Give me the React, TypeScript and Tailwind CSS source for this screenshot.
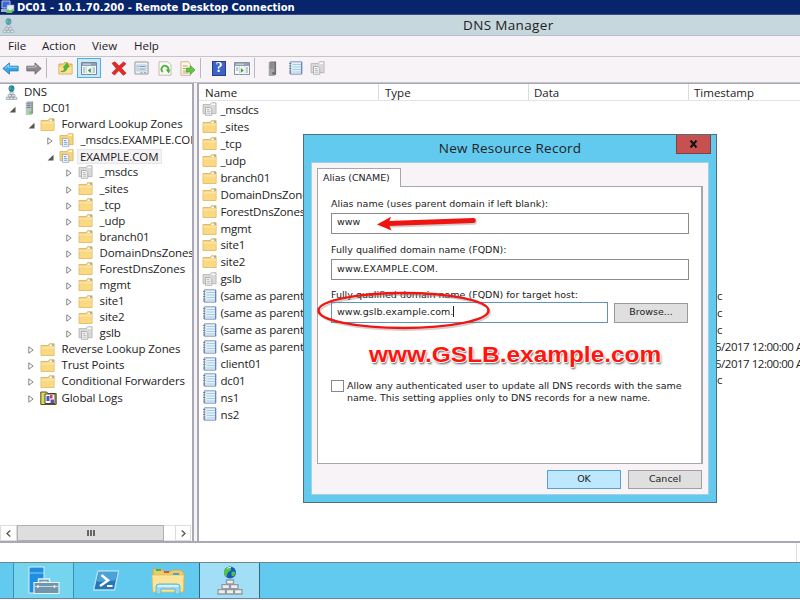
import React from "react";

const Svg = ({ c, v = "0 0 16 16", children }: { c: string; v?: string; children: React.ReactNode }) => (
  <svg className={`shrink-0 ${c}`} viewBox={v} preserveAspectRatio="none">{children}</svg>
);

const Folder = () => (
  <Svg c="h-[13px] w-[15px]" v="0 0 15 13">
    <path d="M1 2.5h7l1.5-1.8h4.6v11.8H1z" fill="#eec765" stroke="#d6aa50" strokeWidth=".7" />
    <path d="M1.4 3.6h12.4v8.6H1.4z" fill="#fbd983" />
    <path d="M1.4 3.6h12.4v2H1.4z" fill="#fde3a0" />
    <path d="M9.5 1.6h3.6v1.5H9.5z" fill="#fff" />
    <path d="M12 1.3h1.5v1.5H12z" fill="#58a5d8" />
  </Svg>
);

const ZoneFolder = ({ gray = false }: { gray?: boolean }) => (
  <Svg c="h-[14px] w-[15px]" v="0 0 15 14">
    <path d="M1 2.5h7l1.5-1.8h4.6v11H1z" fill={gray ? "#d9d9d9" : "#f9d37a"} stroke={gray ? "#aaa" : "#d6aa50"} strokeWidth=".7" />
    <path d="M9.500 1.600h3.600v1.300H9.500z" fill="#fff" />
    <path d="M3.500 5.500h4.500l1.800 1.700v6.100H3.500z" fill={gray ? "#f5f5f5" : "#fff"} stroke={gray ? "#999" : "#7a96b8"} strokeWidth=".7" />
    <path d="M4.800 7.500h2.500M4.800 9.300h3.700M4.800 11.200h3.700" stroke={gray ? "#aaa" : "#4a82cd"} strokeWidth=".8" />
  </Svg>
);

const Record = () => (
  <Svg c="h-[14px] w-[15px]" v="0 0 15 14">
    <path d="M2.3.8h11.4v12.4H2.3z" fill="#e4f2fa" stroke="#8295c0" strokeWidth="1" />
    <path d="M4.500 3.500h8.600M4.500 6h8.600M4.500 8.500h8.600M4.500 11h8.600" stroke="#a6cce0" strokeWidth="1.100" />
    <path d="M1 2.500h2.400M1 5h2.400M1 7.500h2.400M1 10h2.400M1 12h2.400" stroke="#666f88" strokeWidth=".8" />
    <path d="M13.700 1v12" stroke="#5b6fb4" strokeWidth=".8" />
  </Svg>
);

const DnsIcon = ({ c }: { c: string }) => (
  <Svg c={c}>
    <circle cx="8" cy="3.800" r="3.600" fill="#2878c4" />
    <path d="M5.500 2.400c2-2 3-1 2.500.4S6.500 5 6 6.200c-1-.8-1.400-2.600-.5-3.800zM9 3.500l2 .5-1 2.200-1.300-.8z" fill="#43b44e" />
    <path d="M6 7.500h4v2.600H6zM3.800 10.300h4v2.400h-4zM8.300 10.300h4v2.400h-4zM1.500 13h4v2.400h-4zM6 13h4v2.400H6zM10.500 13h4v2.400h-4z" fill="#e4e8eb" stroke="#87919a" strokeWidth=".7" />
  </Svg>
);

const Server = ({ c, on = false }: { c: string; on?: boolean }) => (
  <Svg c={c} v="0 0 10 15">
    <path d="M1 1.500L3 .5h6v13l-2 1H1z" fill={on ? "#8d979e" : "#6f6f6f"} />
    <path d="M1 1.500h6v13H1z" fill={on ? "#b9c5cd" : "#a5a5a5"} />
    <path d="M2 3h4.300M2 5h4.300M2 7h4.300" stroke="#59636a" strokeWidth=".8" />
    <circle cx="6" cy="12.300" r="1.300" fill={on ? "#4bdb34" : "#666"} />
  </Svg>
);

const Logs = () => (
  <Svg c="h-[14px] w-[17px]" v="0 0 17 14">
    <path d="M.8 3V1h6l1 1.500h8.400v11H.8z" fill="#dfd65c" stroke="#55551c" strokeWidth="1" />
    <path d="M5 3h10v9.500H5z" fill="#fff" stroke="#333" strokeWidth=".9" />
    <path d="M6.500 5h3v5h-3z" fill="#3e58d8" /><path d="M10 4h2.500v3.500H10z" fill="#e33b3b" /><path d="M10.500 8.500H14V12h-3.500z" fill="#684bb5" />
  </Svg>
);

type Kind = "dns" | "server" | "folder" | "zone" | "gray" | "logs" | "record";
const Icon = ({ kind }: { kind: Kind }) => {
  switch (kind) {
    case "dns": return <DnsIcon c="h-[15px] w-[13px]" />;
    case "server": return <Server c="h-[14px] w-[9px]" on />;
    case "zone": return <ZoneFolder />;
    case "gray": return <ZoneFolder gray />;
    case "logs": return <Logs />;
    case "record": return <Record />;
    default: return <Folder />;
  }
};

const INDENT = ["pl-[3px]", "pl-[5px]", "pl-[24px]", "pl-[43px]", "pl-[62px]"];
const TREE: [number, Kind, string, "open" | "closed" | ""][] = [
  [0, "dns", "DNS", ""],
  [1, "server", "DC01", "open"],
  [2, "folder", "Forward Lookup Zones", "open"],
  [3, "zone", "_msdcs.EXAMPLE.COM", "closed"],
  [3, "zone", "EXAMPLE.COM", "open"],
  [4, "gray", "_msdcs", "closed"],
  [4, "folder", "_sites", "closed"],
  [4, "folder", "_tcp", "closed"],
  [4, "folder", "_udp", "closed"],
  [4, "folder", "branch01", "closed"],
  [4, "folder", "DomainDnsZones", "closed"],
  [4, "folder", "ForestDnsZones", "closed"],
  [4, "folder", "mgmt", "closed"],
  [4, "folder", "site1", "closed"],
  [4, "folder", "site2", "closed"],
  [4, "gray", "gslb", "closed"],
  [2, "folder", "Reverse Lookup Zones", "closed"],
  [2, "folder", "Trust Points", "closed"],
  [2, "folder", "Conditional Forwarders", "closed"],
  [2, "logs", "Global Logs", "closed"],
];

const RECORDS: [Kind, string, string][] = [
  ["gray", "_msdcs", ""],
  ["folder", "_sites", ""],
  ["folder", "_tcp", ""],
  ["folder", "_udp", ""],
  ["folder", "branch01", ""],
  ["folder", "DomainDnsZones", ""],
  ["folder", "ForestDnsZones", ""],
  ["folder", "mgmt", ""],
  ["folder", "site1", ""],
  ["folder", "site2", ""],
  ["gray", "gslb", ""],
  ["record", "(same as parent", "static"],
  ["record", "(same as parent", "static"],
  ["record", "(same as parent", "static"],
  ["record", "(same as parent", "5/2017 12:00:00 AM"],
  ["record", "client01", "5/2017 12:00:00 AM"],
  ["record", "dc01", "static"],
  ["record", "ns1", ""],
  ["record", "ns2", ""],
];

const Sep = ({ c }: { c: string }) => <div className={`h-[20px] w-px shrink-0 bg-[#b9b9bd] ${c}`} />;

const Toolbar = () => (
  <div className="flex h-[26px] shrink-0 items-center border-b border-[#c5c4ca] bg-[#f7f3f7] pb-[3px] pl-[2px]">
    <Svg c="h-[13px] w-[17px]" v="0 0 16 13"><path d="M.8 6.500L7 .9v3.300h8.200v4.700H7v3.300z" fill="#3aa4e4" stroke="#2379b6" strokeWidth=".8" /><path d="M3 6.200L6.300 3.200v2H14.500" stroke="#8bd3f7" fill="none" /></Svg>
    <Svg c="ml-[7px] h-[13px] w-[16px]" v="0 0 16 13"><path d="M15.200 6.500L9 .9v3.300H.8v4.700H9v3.300z" fill="#8b8b8b" stroke="#646464" strokeWidth=".8" /><path d="M1.500 5.200h8v-2l2 2" stroke="#bbb" fill="none" /></Svg>
    <Sep c="ml-[4px]" />
    <Svg c="ml-[11px] h-[14px] w-[15px]" v="0 0 16 14"><path d="M1 3h5l1-1.500h3L11 3h4v10H1z" fill="#f8d474" stroke="#c99f48" strokeWidth=".8" /><path d="M1.500 6h13v6.500h-13z" fill="#fbe198" /><path d="M3 10.500c3 0 4-2 4.200-4H5.500l4-4.500L12 6h-2c0 3-2.500 5.500-7 4.500z" fill="#52bb35" stroke="#318a20" strokeWidth=".5" /></Svg>
    <div className="ml-[4px] flex h-[20px] w-[24px] items-center justify-center border border-[#4cafe2] bg-[#c8e9fb]"><Svg c="h-[13px] w-[16px]" v="0 0 16 13"><path d="M.5.5h15v12H.5z" fill="#f7fafc" stroke="#74879a" /><path d="M1 1h14v3H1z" fill="#91a0b1" /><path d="M2 2.200h8M5.500 4v8.500M11 4v8.500" stroke="#d0dce6" /><path d="M9.800 6v5l-3-2.500z" fill="#38a532" /><path d="M2 6h2.300M2 8h2.300M2 10h2.300M12 6h2M12 8h2M12 10h2" stroke="#8896a4" /></Svg></div>
    <Svg c="ml-[10px] h-[15px] w-[16px]"><path d="M1 2.500L4 .8l4 4.600L12.500 1 15 3l-4.600 4.800 4.800 5.300-3 2.100-4.300-5L3.500 15 .9 12.700 5.300 8z" fill="#e32b28" stroke="#b41515" strokeWidth=".6" /></Svg>
    <Svg c="ml-[7px] h-[14px] w-[15px]" v="0 0 16 14"><path d="M1 1h14v12H1z" fill="#f3f3f3" stroke="#92989c" /><path d="M3 4h10v6H3z" fill="#dceaf2" stroke="#a7bac5" strokeWidth=".7" /><path d="M4 5.500h1M6 5.500h6M4 8h1M6 8h6M7 11.700h2M10.500 11.700h2.500" stroke="#6b9fc0" /></Svg>
    <Svg c="ml-[9px] h-[15px] w-[14px]" v="0 0 14 15"><path d="M1 .8h9l3 3v10.400H1z" fill="#fafafa" stroke="#b6ac9b" strokeWidth=".8" /><path d="M5 11A3.400 3.400 0 1 1 10 9.500" fill="none" stroke="#48b334" strokeWidth="1.700" /><path d="M7.600 8.600h4.800L10.800 12.600z" fill="#48b334" /></Svg>
    <Svg c="ml-[8px] h-[15px] w-[16px]" v="0 0 17 15"><path d="M1 .8h8l2 2.500v11H1z" fill="#fff8dc" stroke="#bba77c" strokeWidth=".8" /><path d="M3 5h5M3 7.500h4M3 10h5M3 12h6" stroke="#8e8a7b" strokeWidth=".8" /><path d="M7 7h4V4.500l5 4.500-5 4.500V11H7z" fill="#62c741" stroke="#3a9028" strokeWidth=".6" /></Svg>
    <Sep c="ml-[4px]" />
    <div className="ml-[11px] flex h-[15px] w-[14px] items-center justify-center border border-[#233f91] bg-[#3c63c4] font-['Liberation_Serif',serif] text-[14px] font-bold leading-none text-white">?</div>
    <Svg c="ml-[8px] h-[13px] w-[16px]" v="0 0 16 13"><path d="M.5.5h15v12H.5z" fill="#f7fafc" stroke="#85919c" /><path d="M1 1h14v3H1z" fill="#91a0b1" /><path d="M2 2.200h8M5.500 4v8.500M11 4v8.500" stroke="#d0dce6" /><path d="M6.800 6v5l3-2.500z" fill="#38a532" /><path d="M2 6h2.300M2 8h2.300M12 6h2M12 8h2M12 10h2" stroke="#8896a4" /></Svg>
    <Sep c="ml-[4px]" />
    <Server c="ml-[13px] h-[15px] w-[9px]" />
    <div className="ml-[11px] flex"><Record /></div>
    <div className="ml-[7px] flex"><ZoneFolder gray /></div>
  </div>
);

const TreePane = () => (
  <div className="flex w-[194px] shrink-0 flex-col overflow-hidden border-r-2 border-t border-[#a9a9b5] bg-white tracking-[-0.1px]">
    <div className="flex flex-1 flex-col">
      {TREE.map(([level, kind, label, state], i) => (
        <div key={i} className={`flex h-[16.080px] shrink-0 items-center ${INDENT[level]}`}>
          {level > 0 && (
            <div className="flex w-[16px] shrink-0 items-center pl-[4px]">
              {state === "open"
                ? <Svg c="mt-[2px] h-[7px] w-[7px]" v="0 0 7 7"><path d="M6.500.8v5.700H.6z" fill="#555" /></Svg>
                : <Svg c="mt-[2px] h-[8px] w-[6px]" v="0 0 6 8"><path d="M.8.8v6.400l4.300-3.200z" fill="#fff" stroke="#777" strokeWidth=".9" /></Svg>}
            </div>
          )}
          <div className={`flex w-[17px] shrink-0 items-center ${level > 1 ? "" : level === 1 ? "pl-[4px]" : "pl-[2px]"}`}><Icon kind={kind} /></div>
          <span className={label === "EXAMPLE.COM"
            ? "ml-[1px] h-[15px] whitespace-nowrap border border-[#e8e4e8] bg-[#f5f2f5] pl-[2px] pr-[3px] leading-[13px]"
            : level === 0 ? "ml-[4px] whitespace-nowrap leading-[16px]" : "ml-[4.500px] whitespace-nowrap leading-[16px]"}>{label}</span>
        </div>
      ))}
    </div>
    <div className="flex h-[16px] shrink-0 text-[#555]">
      <div className="flex w-[17px] items-center justify-center border border-[#dcdcdc]"><Svg c="h-[7px] w-[5px]" v="0 0 5 7"><path d="M4.300.6L1 3.500l3.300 2.900" fill="none" stroke="#555" strokeWidth="1.300" /></Svg></div>
      <div className="flex w-[147px] items-center justify-center gap-[1px] border border-[#b0b0b0] bg-[#dedede]">
        <i className="h-[6px] w-[2px] bg-[#666]" /><i className="h-[6px] w-[2px] bg-[#666]" /><i className="h-[6px] w-[2px] bg-[#666]" />
      </div>
      <div className="w-[11px] border-y border-[#e3e3e3]" />
      <div className="flex w-[16px] items-center justify-center border border-[#dcdcdc]"><Svg c="h-[7px] w-[5px]" v="0 0 5 7"><path d="M.7.6L4 3.500.7 6.400" fill="none" stroke="#555" strokeWidth="1.300" /></Svg></div>
    </div>
  </div>
);

const ListPane = () => (
  <div className="ml-[3px] flex min-w-0 flex-1 flex-col border-l-2 border-t border-[#a9a9b5] bg-white">
    <div className="flex h-[17px] shrink-0 border-b border-[#e6e2e8] leading-[18px]">
      <div className="w-[180px] border-r border-[#dedbe0] pl-[6px]">Name</div>
      <div className="w-[150px] border-r border-[#dedbe0] pl-[6px]">Type</div>
      <div className="w-[160px] border-r border-[#dedbe0] pl-[5px]">Data</div>
      <div className="pl-[5px]">Timestamp</div>
    </div>
    {RECORDS.map(([kind, name, time], i) => (
      <div key={i} className="flex h-[16.940px] shrink-0 items-center">
        <div className="flex w-[490px] shrink-0 items-center pl-[3px]">
          <Icon kind={kind} />
          <span className="ml-[3.500px] mt-[1px] whitespace-nowrap leading-[16px] tracking-[-0.170px]">{name}</span>
        </div>
        <span className={`whitespace-nowrap leading-[16px] ${time.startsWith("5") ? "pl-[26px] tracking-[-0.480px]" : "pl-[5px]"}`}>{time}</span>
      </div>
    ))}
  </div>
);

const Dialog = () => (
  <div className="absolute left-[303px] top-[134px] flex h-[369px] w-[414px] flex-col border border-[#4f6f7c] bg-[#63caef] px-[7px] pb-[7px] font-['DejaVu_Sans',sans-serif] text-[9.500px] text-[#222]">
    <div className="flex h-[27px] shrink-0 items-start">
      <div className="flex-1 pl-[33px] pt-[3px] text-center font-['Open_Sans',sans-serif] text-[13.500px] leading-[20px] tracking-[0.250px]">New Resource Record</div>
      <div className="-mr-[2px] flex h-[19px] w-[35px] items-center justify-center border border-t-0 border-[#873d3a] bg-[#c75050]">
        <Svg c="h-[8px] w-[9px]" v="0 0 9 8"><path d="M1.500.5l6 7M7.500.5l-6 7" stroke="#111" strokeWidth="2" /></Svg>
      </div>
    </div>
    <div className="flex flex-1 flex-col border border-[#a5cfe0] bg-[#f7f3f7] px-[5px] pt-[5px]">
      <div className="z-10 flex h-[19px] w-[84px] items-center border border-b-0 border-[#a8a6aa] bg-white pl-[5px]"><span className="tracking-[-0.050px]">Alias (CNAME)</span></div>
      <div className="-mt-[1px] flex h-[278px] w-[386px] flex-col border border-r-2 border-[#a8a6aa] bg-white pl-[13px]">
        <div className="mt-[10px] h-[16px] leading-[14px]">Alias name (uses parent domain if left blank):</div>
        <div className="h-[21px] w-[358px] border border-[#8b8b8d] pl-[5px] leading-[16px]">www</div>
        <div className="mt-[9px] h-[16px] leading-[14px]">Fully qualified domain name (FQDN):</div>
        <div className="h-[21px] w-[358px] border border-[#8b8b8d] pl-[5px] leading-[17px] tracking-[0.200px]">www.EXAMPLE.COM.</div>
        <div className="mt-[8px] h-[14px] leading-[14px]">Fully qualified domain name (FQDN) for target host:</div>
        <div className="flex h-[21px] items-center">
          <div className="flex h-[21px] w-[277px] border border-[#5f93bd] pl-[5px] leading-[17px] tracking-[0.050px]">www.gslb.example.com.<i className="mt-[3px] h-[11px] w-px bg-[#222]" /></div>
          <div className="ml-[6px] flex h-[20px] w-[74px] items-center justify-center border border-[#999] bg-[#dfdfdf]">Browse...</div>
        </div>
        <div className="ml-[38px] mt-[15px] flex h-[32px] w-max origin-left scale-x-[1.110] items-center whitespace-nowrap font-['Liberation_Sans',sans-serif] text-[22px] font-bold text-[#ff1510] [text-shadow:1px_0_#fff,-1px_0_#fff,0_1px_#fff,0_-1px_#fff,1px_2px_2px_#555]">www.GSLB.example.com</div>
        <div className="mt-[10px] flex">
          <div className="h-[12px] w-[13px] border border-[#888]" />
          <div className="ml-[3px] whitespace-nowrap leading-[11.500px]">Allow any authenticated user to update all DNS records with the same<br />name. This setting applies only to DNS records for a new name.</div>
        </div>
      </div>
      <div className="mt-[6px] flex justify-end gap-[7px] pr-[1px]">
        <div className="flex h-[19px] w-[74px] items-center justify-center border border-[#55a3cc] bg-[#bde8ff]">OK</div>
        <div className="flex h-[19px] w-[74px] items-center justify-center border border-[#a0a0a0] bg-[#dfdfdf]">Cancel</div>
      </div>
    </div>
    <svg className="pointer-events-none absolute left-0 top-0 z-20 h-[210px] w-[200px]" viewBox="304 135 200 210">
      <path d="M388 223.500L473.500 220.500" stroke="#777" strokeWidth="4.500" strokeLinecap="round" opacity=".35" transform="translate(1 2)" />
      <path d="M388 223.500L473.500 220.500" stroke="#f01410" strokeWidth="4.800" strokeLinecap="round" />
      <path d="M377 224.500L391 216.800L388.500 223.500L391.500 230.500z" fill="#f01410" />
      <ellipse cx="404" cy="311" rx="85" ry="17.500" fill="none" stroke="#777" strokeWidth="2" opacity=".35" transform="translate(1 1.500)" />
      <ellipse cx="403.500" cy="310.500" rx="85" ry="17.500" fill="none" stroke="#f01611" strokeWidth="2.500" />
    </svg>
  </div>
);

const Taskbar = () => (
  <div className="flex h-[37px] shrink-0 border-y border-[#71868f] bg-[#63caef] pl-[13px]">
    <div className="flex w-[61px] items-center justify-center border border-y-0 border-[#3d91ad] bg-[#75d4ee]">
      <Svg c="h-[29px] w-[33px]" v="0 0 33 29">
        <path d="M2 1h15v26H2z" fill="#1d8ee0" stroke="#d9f1fb" strokeWidth="1" /><path d="M2 7h15" stroke="#8fccf0" />
        <path d="M12.500 16v-2h9v2" fill="none" stroke="#e2f2f8" strokeWidth="3.500" /><path d="M7 16.500h25v11H7z" fill="#7395ac" stroke="#e2f2f8" strokeWidth="1.200" />
        <path d="M13 16v-1.500h8V16" fill="none" stroke="#7395ac" strokeWidth="1.500" /><path d="M8 20.500h23" stroke="#dce9ef" strokeWidth=".8" /><path d="M11 19.300v2.400M27.500 19.300v2.400" stroke="#fff" strokeWidth="1.500" />
      </Svg>
    </div>
    <div className="flex w-[63px] items-center justify-center">
      <Svg c="h-[21px] w-[28px]" v="0 0 28 21">
        <path d="M6 1h20.500l-4 19H1.500z" fill="#2876b7" stroke="#b5e4f7" strokeWidth="1.300" strokeLinejoin="round" /><path d="M6.500 2h18.800l-2 8.500c-7 0-11 2-18.500 1z" fill="#4ba2d7" />
        <path d="M9.500 5l6.500 5.500L8 16" stroke="#fff" strokeWidth="2.500" fill="none" /><path d="M15 16h5.500" stroke="#fff" strokeWidth="2" />
      </Svg>
    </div>
    <div className="flex w-[62px] items-center justify-center">
      <Svg c="h-[28px] w-[34px]" v="0 0 34 28">
        <path d="M2 6V2h9l2 3h6l2-2h9l3 3v18H2z" fill="#ebcb67" stroke="#cba94f" strokeWidth=".8" />
        <path d="M1 8h32l-1 17H2z" fill="#f9e69a" stroke="#ddbd59" strokeWidth=".7" />
        <path d="M5 2h5v2H5z" fill="#3fb84a" /><path d="M13 4h5v2h-5z" fill="#e1523c" /><path d="M22 6h6v2h-6z" fill="#4a9fe0" />
        <path d="M5 27v-7q0-3 3-3h18q3 0 3 3v7h-5v-5H10v5z" fill="#9bd9ef" stroke="#63b3d5" strokeWidth="1" /><path d="M6.500 19h21" stroke="#e4f8ff" strokeWidth="1.500" />
      </Svg>
    </div>
    <div className="flex w-[61px] items-center justify-center border border-y-0 border-[#2f6a80] bg-[#a2dff7]">
      <Svg c="h-[30px] w-[26px]" v="0 0 26 30">
        <circle cx="13" cy="6.500" r="6" fill="#1757bb" /><path d="M8 3.500c2-3 5-3 6-1s-2 3-3 4-1 3.500-1.500 4.500C6.500 9 6.500 5.500 8 3.500zM14.500 5.500l4 .5-1.500 4.500-2.500-1z" fill="#4fc645" /><path d="M10 2.500q2-1.500 4-1" stroke="#d4f0ff" fill="none" />
        <path d="M9.500 14h7v4h-7zM5 18.700h7.500v4H5zM13.500 18.700H21v4h-7.500zM1 23.700h7.500v4.300H1zM9.300 23.700h7.400v4.300H9.300zM17.500 23.700H25v4.300h-7.500z" fill="#eee" stroke="#929aa0" strokeWidth="1.300" />
      </Svg>
    </div>
  </div>
);

export default function App() {
  return (
    <div className="relative flex h-[600px] w-[800px] flex-col overflow-hidden bg-[#f7f3f7] font-['Open_Sans',sans-serif] text-[11.500px] text-[#222]">
      <div className="flex h-[15px] shrink-0 items-center border-b border-[#3a4b80] bg-[#08246b] font-['DejaVu_Sans',sans-serif] text-[10px] font-bold tracking-[-0.030px] text-white">
        <Svg c="mr-[2px] h-[14px] w-[15px]" v="0 0 15 14"><path d="M2 1h8v7H2z" fill="#3d65dc" stroke="#b7cae6" /><path d="M1 9h8v3H1z" fill="#9bb3d1" /><path d="M7 5h7v6H7z" fill="#dfe9ef" stroke="#8b9da7" strokeWidth=".6" /><path d="M6 13l2-4 2 2 4-3-2 5z" fill="#62c757" /></Svg>
        <span className="leading-[13px]">DC01 - 10.1.70.200 - Remote Desktop Connection</span>
      </div>
      <div className="flex h-[21px] shrink-0 items-center border-b border-[#b4bfc8] bg-[#c6d7de] pl-[2px]">
        <div className="opacity-70"><DnsIcon c="h-[15px] w-[13px]" /></div>
        <span className="ml-[448px] text-[13.500px] leading-[20px] tracking-[0.350px]">DNS Manager</span>
      </div>
      <div className="flex h-[21px] shrink-0 border-b border-[#c6c4c9] bg-[#f7f3f7] pl-[8px] leading-[20px]">
        <span className="w-[34px]">File</span><span className="w-[50px]">Action</span><span className="w-[42px]">View</span><span>Help</span>
      </div>
      <Toolbar />
      <div className="flex h-[460px] shrink-0 border-b-2 border-[#a9a9b5]">
        <TreePane />
        <ListPane />
      </div>
      <div className="flex h-[19px] shrink-0 justify-end bg-white"><div className="mr-[3px] w-px bg-[#ddd]" /></div>
      <Taskbar />
      <Dialog />
    </div>
  );
}
